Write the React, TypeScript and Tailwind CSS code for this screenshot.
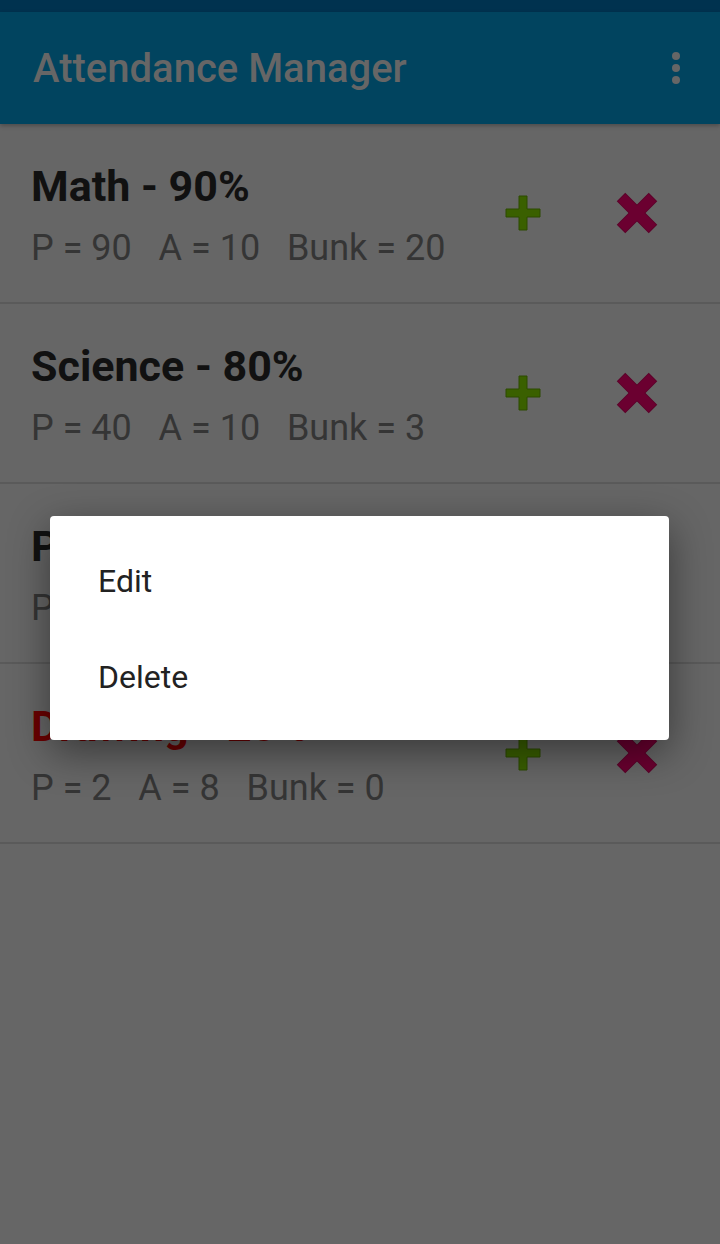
import React from "react";

const rows = [
  { name: "Math - 90%", p: 90, a: 10, b: 20, red: false },
  { name: "Science - 80%", p: 40, a: 10, b: 3, red: false },
  { name: "Physics - 70%", p: 7, a: 3, b: 1, red: false },
  { name: "Drawing - 20%", p: 2, a: 8, b: 0, red: true },
];

function Plus() {
  return (
    <svg width="38" height="38" viewBox="0 0 38 38">
      <path d="M15 2h8v13h13v8H23v13h-8V23H2v-8h13z" fill="#3a6000" stroke="#2d4a00" strokeWidth="1" />
    </svg>
  );
}

function Cross() {
  return (
    <svg width="42" height="42" viewBox="0 0 42 42">
      <g stroke="#5a0028" strokeWidth="12" strokeLinecap="butt">
        <line x1="5" y1="5" x2="37" y2="37" />
        <line x1="37" y1="5" x2="5" y2="37" />
      </g>
      <g stroke="#6b0030" strokeWidth="10.5" strokeLinecap="butt">
        <line x1="5.6" y1="5.6" x2="36.4" y2="36.4" />
        <line x1="36.4" y1="5.6" x2="5.6" y2="36.4" />
      </g>
    </svg>
  );
}

export default function App() {
  return (
    <div
      className="relative w-[720px] h-[1244px] overflow-hidden bg-[#666666]"
      style={{ fontFamily: "Roboto, 'Noto Sans', sans-serif" }}
    >
      <div className="h-[12px] bg-[#00324f]" />
      <div className="h-[112px] bg-[#01445f] flex items-center justify-between pl-[33px] pr-[30px] shadow-[0_2px_4px_rgba(0,0,0,0.25)] relative z-10">
        <span className="text-[40px] font-medium text-[#666666] pt-[2px]">Attendance Manager</span>
        <div className="flex flex-col gap-[4px] items-center mr-[10px]">
          <span className="w-[8px] h-[8px] rounded-full bg-[#666666]" />
          <span className="w-[8px] h-[8px] rounded-full bg-[#666666]" />
          <span className="w-[8px] h-[8px] rounded-full bg-[#666666]" />
        </div>
      </div>
      <div className="flex flex-col">
        {rows.map((r) => (
          <div key={r.name} className="h-[180px] border-b-2 border-[#5a5a5a] flex items-center pl-[31px] pr-[43px]">
            <div className="flex-1 flex flex-col gap-[16px] pt-[4px]">
              <span className={`text-[43px] font-bold leading-[50px] ${r.red ? "text-[#6b0000]" : "text-[#111111]"}`}>{r.name}</span>
              <span className="text-[36px] leading-[42px] text-[#353535] whitespace-pre">
                {`P = ${r.p}   A = ${r.a}   Bunk = ${r.b}`}
              </span>
            </div>
            <div className="flex items-center gap-[34px]">
              <div className="w-[80px] flex justify-center"><Plus /></div>
              <div className="w-[80px] flex justify-center"><Cross /></div>
            </div>
          </div>
        ))}
      </div>
      <div className="absolute left-[50px] top-[516px] w-[619px] h-[224px] bg-white rounded-[4px] shadow-[0_12px_40px_rgba(0,0,0,0.45)] py-[16px] flex flex-col">
        <div className="h-[96px] flex items-center pl-[48px] text-[32px] text-[#222222] pt-[2px]">Edit</div>
        <div className="h-[96px] flex items-center pl-[48px] text-[32px] text-[#222222] pt-[2px]">Delete</div>
      </div>
    </div>
  );
}
